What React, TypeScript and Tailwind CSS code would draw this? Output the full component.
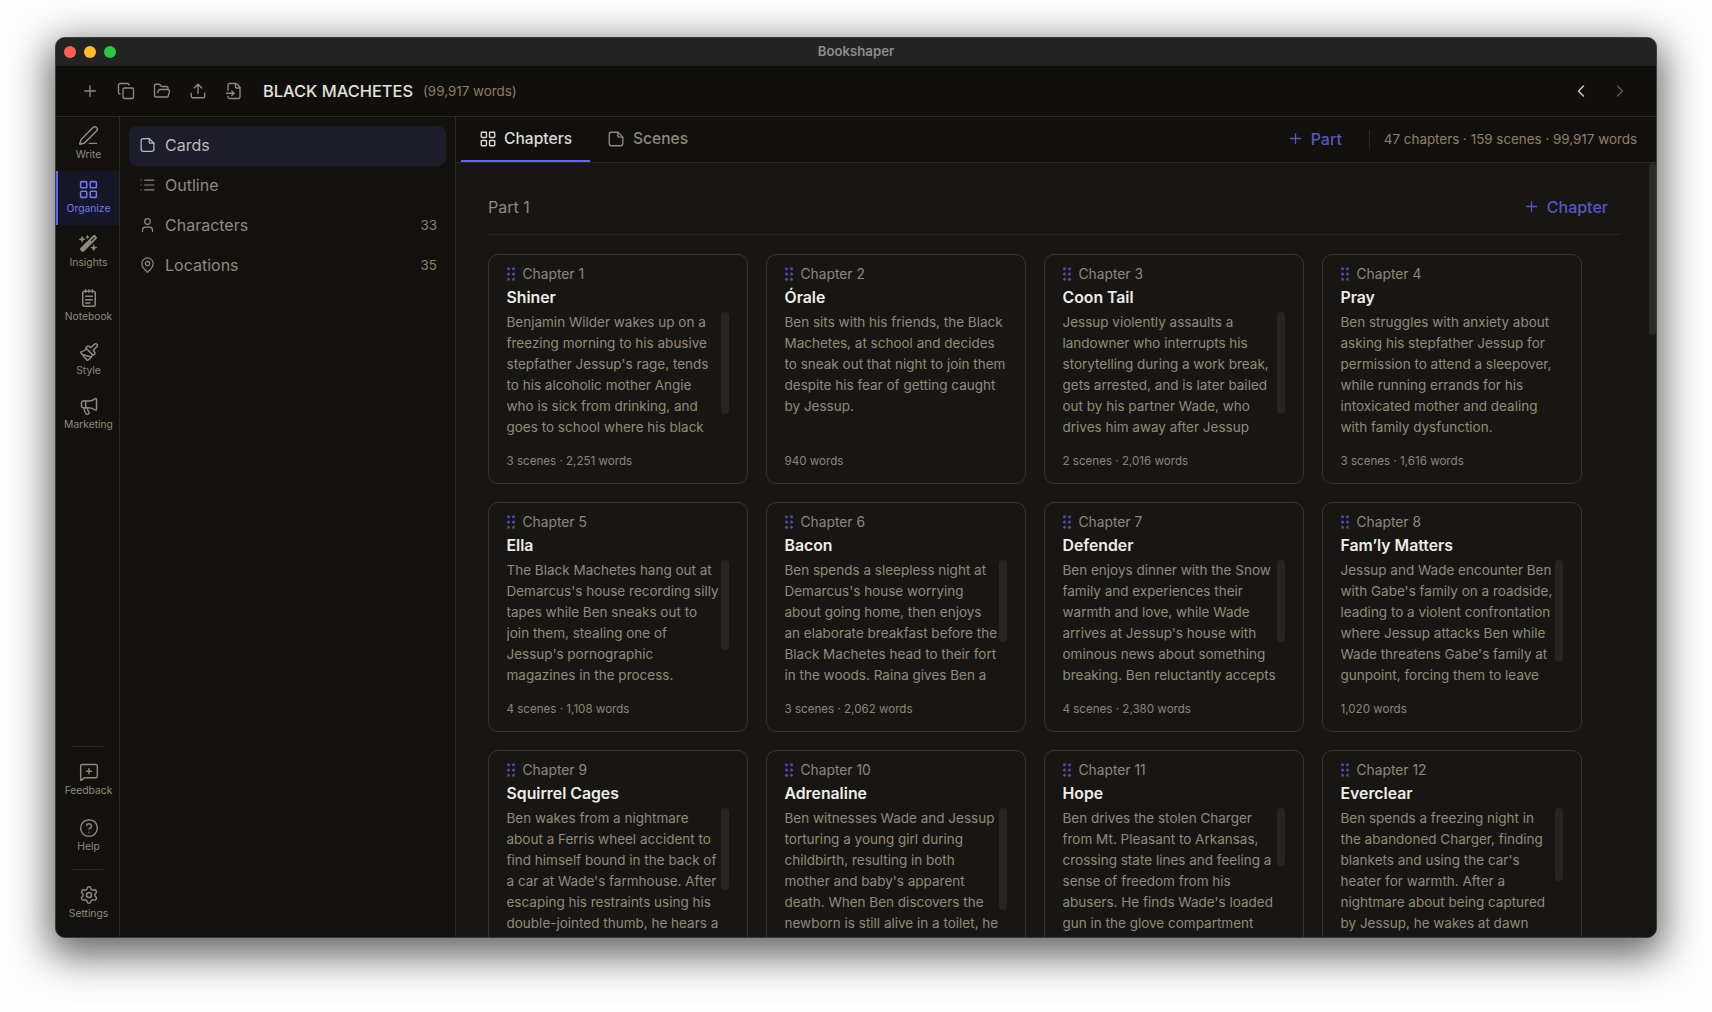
import {
  ChevronLeft,
  ChevronRight,
  CircleHelp,
  Copy,
  FileInput,
  FolderOpen,
  LayoutGrid,
  List,
  MapPin,
  Megaphone,
  MessageSquarePlus,
  Paintbrush,
  PenLine,
  Plus,
  Settings,
  Upload,
  User,
} from "lucide-react";
import { FaWandMagicSparkles } from "react-icons/fa6";
import type { ReactNode } from "react";

const chapters = [
  {
    n: 1,
    title: "Shiner",
    text: "Benjamin Wilder wakes up on a freezing morning to his abusive stepfather Jessup's rage, tends to his alcoholic mother Angie who is sick from drinking, and goes to school where his black",
    meta: "3 scenes · 2,251 words",
    thumb: 102,
  },
  {
    n: 2,
    title: "Órale",
    text: "Ben sits with his friends, the Black Machetes, at school and decides to sneak out that night to join them despite his fear of getting caught by Jessup.",
    meta: "940 words",
    thumb: 0,
  },
  {
    n: 3,
    title: "Coon Tail",
    text: "Jessup violently assaults a landowner who interrupts his storytelling during a work break, gets arrested, and is later bailed out by his partner Wade, who drives him away after Jessup",
    meta: "2 scenes · 2,016 words",
    thumb: 102,
  },
  {
    n: 4,
    title: "Pray",
    text: "Ben struggles with anxiety about asking his stepfather Jessup for permission to attend a sleepover, while running errands for his intoxicated mother and dealing with family dysfunction.",
    meta: "3 scenes · 1,616 words",
    thumb: 0,
  },
  {
    n: 5,
    title: "Ella",
    text: "The Black Machetes hang out at Demarcus's house recording silly tapes while Ben sneaks out to join them, stealing one of Jessup's pornographic magazines in the process.",
    meta: "4 scenes · 1,108 words",
    thumb: 90,
  },
  {
    n: 6,
    title: "Bacon",
    text: "Ben spends a sleepless night at Demarcus's house worrying about going home, then enjoys an elaborate breakfast before the Black Machetes head to their fort in the woods. Raina gives Ben a",
    meta: "3 scenes · 2,062 words",
    thumb: 82,
  },
  {
    n: 7,
    title: "Defender",
    text: "Ben enjoys dinner with the Snow family and experiences their warmth and love, while Wade arrives at Jessup's house with ominous news about something breaking. Ben reluctantly accepts",
    meta: "4 scenes · 2,380 words",
    thumb: 82,
  },
  {
    n: 8,
    title: "Fam’ly Matters",
    text: "Jessup and Wade encounter Ben with Gabe's family on a roadside, leading to a violent confrontation where Jessup attacks Ben while Wade threatens Gabe's family at gunpoint, forcing them to leave",
    meta: "1,020 words",
    thumb: 102,
  },
  {
    n: 9,
    title: "Squirrel Cages",
    text: "Ben wakes from a nightmare about a Ferris wheel accident to find himself bound in the back of a car at Wade's farmhouse. After escaping his restraints using his double-jointed thumb, he hears a",
    meta: "5 scenes · 3,104 words",
    thumb: 82,
  },
  {
    n: 10,
    title: "Adrenaline",
    text: "Ben witnesses Wade and Jessup torturing a young girl during childbirth, resulting in both mother and baby's apparent death. When Ben discovers the newborn is still alive in a toilet, he",
    meta: "3 scenes · 2,410 words",
    thumb: 102,
  },
  {
    n: 11,
    title: "Hope",
    text: "Ben drives the stolen Charger from Mt. Pleasant to Arkansas, crossing state lines and feeling a sense of freedom from his abusers. He finds Wade's loaded gun in the glove compartment",
    meta: "7 scenes · 4,022 words",
    thumb: 58,
  },
  {
    n: 12,
    title: "Everclear",
    text: "Ben spends a freezing night in the abandoned Charger, finding blankets and using the car's heater for warmth. After a nightmare about being captured by Jessup, he wakes at dawn",
    meta: "4 scenes · 2,730 words",
    thumb: 73,
  },
];

function NotebookIcon() {
  return (
    <svg width="20" height="20" viewBox="0 0 24 24" fill="none" stroke="currentColor" strokeWidth="1.8" strokeLinecap="round">
      <rect x="4.5" y="4" width="15" height="18" rx="2.5" />
      <path d="M8 2v3M12 2v3M16 2v3M8 10h8M8 14h8M8 18h5" />
    </svg>
  );
}

function PageIcon({ size }: { size: number }) {
  return (
    <svg width={size} height={size} viewBox="0 0 24 24" fill="none" stroke="currentColor" strokeWidth="1.8" strokeLinecap="round" strokeLinejoin="round">
      <path d="M6 3h8.5L21 9.5V18a3 3 0 0 1-3 3H6a3 3 0 0 1-3-3V6a3 3 0 0 1 3-3z" />
      <path d="M14.5 3v5a1.5 1.5 0 0 0 1.5 1.5h5" />
    </svg>
  );
}

function Grip() {
  return (
    <svg width="8" height="14" viewBox="0 0 8 14" fill="#4c4caf" className="shrink-0">
      <circle cx="1.5" cy="1.8" r="1.5" />
      <circle cx="6.5" cy="1.8" r="1.5" />
      <circle cx="1.5" cy="7" r="1.5" />
      <circle cx="6.5" cy="7" r="1.5" />
      <circle cx="1.5" cy="12.2" r="1.5" />
      <circle cx="6.5" cy="12.2" r="1.5" />
    </svg>
  );
}

function RailItem({ icon, label, active, tall }: { icon: ReactNode; label: string; active?: boolean; tall?: boolean }) {
  return (
    <div
      className={
        (tall ? "h-[56px] " : "h-[54px] ") +
        "flex flex-col items-center justify-center gap-[1px] border-l-2 pb-[2px] " +
        (active ? "border-[#6366f1] bg-[#151726] text-[#7476ee]" : "border-transparent text-[#8f8a7d]")
      }
    >
      <span className="flex h-[21px] items-center">{icon}</span>
      <span className="text-[10.3px] leading-[14px]">{label}</span>
    </div>
  );
}

function NavItem({ icon, label, count, active }: { icon: ReactNode; label: string; count?: number; active?: boolean }) {
  return (
    <div
      className={
        "flex h-10 items-center rounded-lg pb-[2px] pl-[10px] pr-[9px] text-[16px] " +
        (active ? "bg-[#1c1c2b] text-[#bdbab2]" : "text-[#8f8a7d]")
      }
    >
      <span className="mr-[9px] flex w-[17px] justify-center">{icon}</span>
      <span className="flex-1">{label}</span>
      {count !== undefined && <span className="text-[13.4px] text-[#8f8069]">{count}</span>}
    </div>
  );
}

function ChapterCard({ chapter }: { chapter: (typeof chapters)[number] }) {
  return (
    <div className="flex h-[230px] flex-col rounded-[10px] border border-[#38352c] pb-[14px] pl-[17.5px] pr-[13px] pt-[9px]">
      <div className="flex h-5 items-center gap-[8px] text-[13.8px] text-[#8f897c]">
        <Grip />
        <span>Chapter {chapter.n}</span>
      </div>
      <div className="mt-[2px] h-[26px] text-[15.8px] font-semibold leading-[24px] text-[#eeedea]">{chapter.title}</div>
      <div className="relative h-[126px] overflow-hidden">
        <p className={(chapter.thumb ? "w-[215px] " : "w-[222px] ") + "text-[13.5px] leading-[21px] text-[#918b7d]"}>{chapter.text}</p>
        {chapter.thumb > 0 && (
          <div className="absolute left-[214.5px] top-0 w-2 rounded-full bg-[#26251f]" style={{ height: chapter.thumb }} />
        )}
      </div>
      <div className="mt-auto text-[11.6px] leading-4 text-[#8c8678]">{chapter.meta}</div>
    </div>
  );
}

export default function App() {
  return (
    <div className="h-[1012px] w-[1712px] overflow-hidden bg-[#fdfdfd] pl-[55px] pt-[37px] font-['Inter',sans-serif]">
      <div className="flex h-[901px] w-[1602px] flex-col overflow-hidden rounded-[10px] border border-[#3c3c3c] bg-[#12110e] shadow-[0_12px_38px_6px_rgba(0,0,0,0.6)]">
        {/* TITLE BAR */}
        <div className="grid h-[28px] shrink-0 grid-cols-3 items-center bg-[#232323] px-2">
          <div className="flex gap-2">
            <span className="h-3 w-3 rounded-full bg-[#ff5f57]" />
            <span className="h-3 w-3 rounded-full bg-[#febc2e]" />
            <span className="h-3 w-3 rounded-full bg-[#28c840]" />
          </div>
          <div className="text-center text-[13.2px] font-semibold text-[#8c8c8c]">Bookshaper</div>
        </div>

        {/* TOOLBAR */}
        <div className="flex h-[51px] shrink-0 items-center border-b border-[#2b2a26] bg-[#100f0c] pl-[25px] pr-[26px] text-[#8f8a7d]">
          <div className="flex w-[182px] items-center gap-[18px]">
            <Plus size={18} strokeWidth={1.8} />
            <Copy size={18} strokeWidth={1.8} />
            <FolderOpen size={18} strokeWidth={1.8} />
            <Upload size={18} strokeWidth={1.8} />
            <FileInput size={18} strokeWidth={1.8} />
          </div>
          <span className="text-[16.4px] font-medium text-[#e2e1dd]">BLACK MACHETES</span>
          <span className="ml-[10px] text-[13.4px] text-[#8f7e66]">(99,917 words)</span>
          <div className="ml-auto flex items-center gap-[19px]">
            <ChevronLeft size={20} strokeWidth={1.8} className="text-[#c9c7c0]" />
            <ChevronRight size={20} strokeWidth={1.8} className="text-[#5a574f]" />
          </div>
        </div>

        <div className="flex min-h-0 flex-1">
          {/* ICON RAIL */}
          <div className="flex w-[64px] shrink-0 flex-col border-r border-[#2b2a26]">
            <RailItem icon={<PenLine size={21} strokeWidth={1.7} />} label="Write" />
            <RailItem icon={<LayoutGrid size={21} strokeWidth={1.8} />} label="Organize" active />
            <RailItem icon={<FaWandMagicSparkles size={19} />} label="Insights" />
            <RailItem icon={<NotebookIcon />} label="Notebook" />
            <RailItem icon={<Paintbrush size={20} strokeWidth={1.8} />} label="Style" />
            <RailItem icon={<Megaphone size={20} strokeWidth={1.8} />} label="Marketing" />
            <div className="mt-auto pb-[6px]">
              <div className="mx-[16px] mb-[5px] border-t border-[#2b2a26]" />
              <RailItem icon={<MessageSquarePlus size={20} strokeWidth={1.7} />} label="Feedback" tall />
              <RailItem icon={<CircleHelp size={20} strokeWidth={1.7} />} label="Help" tall />
              <div className="mx-[16px] my-[5px] border-t border-[#2b2a26]" />
              <RailItem icon={<Settings size={20} strokeWidth={1.7} />} label="Settings" tall />
            </div>
          </div>

          {/* SECTION NAV */}
          <div className="flex w-[336px] shrink-0 flex-col border-r border-[#2b2a26] pl-[9px] pr-[9px] pt-[9px]">
            <NavItem icon={<PageIcon size={20} />} label="Cards" active />
            <NavItem icon={<List size={20} strokeWidth={1.7} />} label="Outline" />
            <NavItem icon={<User size={20} strokeWidth={1.7} />} label="Characters" count={33} />
            <NavItem icon={<MapPin size={20} strokeWidth={1.7} />} label="Locations" count={35} />
          </div>

          {/* MAIN */}
          <div className="flex min-w-0 flex-1 flex-col">
            <div className="flex h-[46px] shrink-0 items-center border-b border-[#2b2a26] bg-[#12100d] pl-[5px] pr-[19px]">
              <div className="flex h-full w-[129px] items-center gap-[7px] border-b-2 border-[#6366f1] pl-[18px] text-[15.6px] font-medium text-[#dbdad6]">
                <LayoutGrid size={18} strokeWidth={1.8} />
                Chapters
              </div>
              <div className="ml-[17px] flex h-full items-center gap-[8px] border-b-2 border-transparent text-[15.6px] font-medium text-[#8f8a7d]">
                <PageIcon size={18} />
                Scenes
              </div>
              <div className="ml-auto flex items-center gap-[7px] pb-[2px] text-[16px] font-medium text-[#5558c0]">
                <Plus size={17} strokeWidth={1.8} />
                Part
              </div>
              <div className="ml-[27px] mr-[14px] h-[19px] border-l border-[#2b2a26]" />
              <span className="text-[13.4px] text-[#8f8069]">47 chapters · 159 scenes · 99,917 words</span>
            </div>

            <div className="relative min-h-0 flex-1 overflow-hidden bg-[#171612] pl-[32px] pr-[35px]">
              <div className="flex h-[72px] items-center justify-between border-b border-[#262520] pt-4">
                <span className="text-[16px] text-[#8f8a7d]">Part 1</span>
                <div className="mr-[13px] flex items-center gap-[7px] text-[16px] font-medium text-[#5558c0]">
                  <Plus size={17} strokeWidth={1.8} />
                  Chapter
                </div>
              </div>
              <div className="mt-[19px] grid grid-cols-[repeat(4,260px)] gap-x-[18px] gap-y-[18px]">
                {chapters.map(c => (
                  <ChapterCard key={c.n} chapter={c} />
                ))}
              </div>
              <div className="absolute right-0 top-0 h-[172px] w-[7px] rounded-full bg-[#2c2b27]" />
            </div>
          </div>
        </div>
      </div>
    </div>
  );
}
